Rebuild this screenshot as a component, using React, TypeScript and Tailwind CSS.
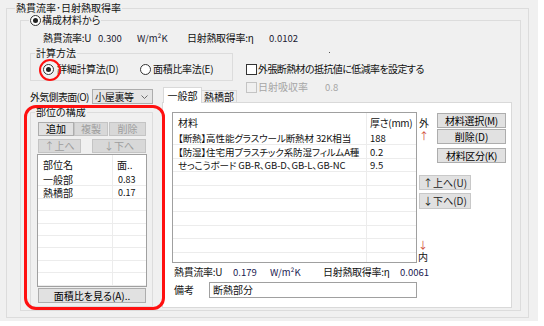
import React from "react";

function Radio({ checked }: { checked?: boolean }) {
  return (
    <span className="w-[11px] h-[11px] rounded-full border border-[#333333] bg-white flex items-center justify-center shrink-0">
      {checked && <span className="w-[5px] h-[5px] rounded-full bg-[#222222]" />}
    </span>
  );
}

function Checkbox({ disabled }: { disabled?: boolean }) {
  return (
    <span
      className={
        disabled
          ? "w-[11px] h-[11px] border border-[#c4c4c4] bg-[#f0f0f0] shrink-0"
          : "w-[11px] h-[11px] border border-[#333333] bg-white shrink-0"
      }
    />
  );
}

function Btn({
  children,
  className,
  disabled,
  light,
}: {
  children: React.ReactNode;
  className: string;
  disabled?: boolean;
  light?: boolean;
}) {
  const base = "flex items-center justify-center whitespace-nowrap border shrink-0 ";
  const look = disabled
    ? "bg-[#d8d8d8] border-[#c4c4c4] text-[#9d9d9d] "
    : light
    ? "bg-[#e1e1e1] border-[#c8c8c8] text-[#222222] "
    : "bg-[#e1e1e1] border-[#adadad] text-black ";
  return <div className={base + look + className}>{children}</div>;
}

const leftRows = [
  ["一般部", "0.83"],
  ["熱橋部", "0.17"],
  ["", ""],
  ["", ""],
  ["", ""],
  ["", ""],
  ["", ""],
  ["", ""],
  ["", ""],
];

const matRows = [
  ["【断熱】高性能グラスウール断熱材 32K相当", "188"],
  ["【防湿】住宅用プラスチック系防湿フィルムA種", "0.2"],
  ["せっこうボード GB-R、GB-D、GB-L、GB-NC", "9.5"],
  ["", ""],
  ["", ""],
  ["", ""],
  ["", ""],
  ["", ""],
  ["", ""],
  ["", ""],
];

export default function App() {
  return (
    <div className="w-[544px] h-[326px] bg-white overflow-hidden font-['Noto_Sans_CJK_JP','Noto_Sans',sans-serif] text-[10px] leading-[12px] text-[#111111] [font-feature-settings:'palt']">
      <div className="w-[538px] h-[321px] bg-[#f0f0f0] pt-[2px] pl-[6px]">
        <fieldset className="w-[523px] h-[316px] border border-[#dcdcdc]">
          <legend className="ml-[8px] px-[1px] leading-[12px]">熱貫流率･日射熱取得率</legend>

          <fieldset className="ml-[13px] w-[501px] h-[297px] border border-[#dcdcdc]">
            <legend className="ml-[8px] px-[1px] leading-[12px]">
              <span className="flex items-center h-[12px]">
                <Radio checked />
                <span className="ml-[1px]">構成材料から</span>
              </span>
            </legend>

            <div className="flex flex-col">
              {/* stats */}
              <div className="mt-[6px] ml-[22px] grid grid-cols-[55px_39px_50px_82px_auto] h-[12px] items-center whitespace-nowrap">
                <span className="tracking-[-0.3px]">熱貫流率:U</span>
                <span className="text-[#202030] text-[9.5px]">0.300</span>
                <span className="text-[#202030] text-[9.5px]">W/m²K</span>
                <span className="tracking-[-0.3px]">日射熱取得率:η</span>
                <span className="text-[#202030] text-[9.5px]">0.0102</span>
              </div>

              {/* calc method + checkboxes */}
              <div className="mt-[3px] flex items-start">
                <fieldset className="ml-[9px] w-[203px] h-[34px] border border-[#dcdcdc]">
                  <legend className="ml-[4px] px-[1px] leading-[12px]">計算方法</legend>
                  <div className="relative mt-[4px] pl-[12px] flex items-center h-[12px] whitespace-nowrap">
                    <span className="w-[97px] flex items-center">
                      <Radio checked />
                      <span className="ml-[3px] tracking-[-0.3px]">詳細計算法(D)</span>
                    </span>
                    <Radio />
                    <span className="ml-[2px] tracking-[-0.3px]">面積比率法(E)</span>
                    <span className="absolute left-[8px] top-[-4px] w-[22px] h-[22px] rounded-full border-[2.5px] border-[#ff1010]" />
                  </div>
                </fieldset>
                <div className="ml-[13px] flex flex-col -mb-[6px] whitespace-nowrap">
                  <span className="ml-[83px] mt-[5px] w-[1px] h-[1px] bg-[#555555]" />
                  <div className="mt-[10px] flex items-center h-[12px]">
                    <Checkbox />
                    <span className="ml-[1px] tracking-[-0.6px]">外張断熱材の抵抗値に低減率を設定する</span>
                  </div>
                  <div className="mt-[6px] flex items-center h-[12px] text-[#a6a6a6]">
                    <Checkbox disabled />
                    <span className="ml-[1px] w-[67px]">日射吸収率</span>
                    <span className="text-[9.5px]">0.8</span>
                  </div>
                </div>
              </div>

              {/* bottom area */}
              <div className="flex">
                {/* left column */}
                <div className="relative w-[141px] pl-[9px] flex flex-col shrink-0">
                  <div className="mt-[2px] flex items-center h-[15px] whitespace-nowrap">
                    <span className="w-[62px] tracking-[-0.7px]">外気側表面(O)</span>
                    <div className="w-[61px] h-[15px] border border-[#adadad] bg-[#e5e5e5] flex items-center justify-between pl-[2px] pr-[4px]">
                      <span className="tracking-[-0.3px]">小屋裏等</span>
                      <svg width="7" height="4" viewBox="0 0 7 4">
                        <polyline points="0.5,0.5 3.5,3.5 6.5,0.5" fill="none" stroke="#6a6a6a" strokeWidth="1" />
                      </svg>
                    </div>
                  </div>

                  <fieldset className="mt-[2px] w-[123px] h-[201px] border border-[#dcdcdc]">
                    <legend className="ml-[4px] px-[1px] leading-[12px]">部位の構成</legend>
                    <div className="flex flex-col">
                      <div className="mt-[4px] ml-[7px] flex h-[14px]">
                        <Btn className="w-[36px] h-[14px]">追加</Btn>
                        <Btn className="w-[34px] h-[14px]" disabled>複製</Btn>
                        <Btn className="ml-[1px] w-[37px] h-[14px]" disabled>削除</Btn>
                      </div>
                      <div className="mt-[3px] ml-[7px] flex h-[14px]">
                        <Btn className="w-[43px] h-[14px]" disabled>↑上へ</Btn>
                        <Btn className="ml-[11px] w-[54px] h-[14px]" disabled>↓下へ</Btn>
                      </div>
                      <div className="mt-[1px] ml-[6px] w-[110px] h-[133px] border border-[#a0a0a0] bg-white overflow-hidden flex flex-col">
                        <div className="flex h-[19px] shrink-0">
                          <div className="w-[75px] border-r border-[#ececec] pl-[5px] flex items-center">部位名</div>
                          <div className="pl-[4px] flex items-center">面..</div>
                        </div>
                        {leftRows.map((r, i) => (
                          <div key={i} className="flex h-[12.4px] shrink-0 border-b border-[#ececec] leading-[11px]">
                            <div className="w-[75px] border-r border-[#ececec] pl-[5px] flex items-center">{r[0]}</div>
                            <div className="pl-[5px] flex items-center text-[9px]">{r[1]}</div>
                          </div>
                        ))}
                      </div>
                      <Btn className="mt-[1px] ml-[7px] w-[108px] h-[15px]">面積比を見る(A)..</Btn>
                    </div>
                  </fieldset>

                  <span className="absolute left-[3px] top-[18px] w-[141px] h-[205px] rounded-[12px] border-[3px] border-[#ff1010] z-10" />
                </div>

                {/* right column: tabs */}
                <div className="flex flex-col w-[350px]">
                  <div className="flex items-end h-[15px] pl-[1px]">
                    <div className="relative z-10 -mb-[1px] w-[39px] h-[16px] bg-white border-l border-t border-r border-[#d9d9d9] flex items-center justify-center">
                      一般部
                    </div>
                    <div className="w-[35px] h-[12px] bg-[#f0f0f0] border-t border-r border-[#d9d9d9] flex items-center justify-center">
                      熱橋部
                    </div>
                  </div>
                  <div className="w-[350px] h-[206px] border border-[#d9d9d9] bg-white flex flex-col">
                    <div className="flex">
                      <div className="ml-[9px] mt-[9px] w-[245px] h-[151px] border border-[#a0a0a0] overflow-hidden flex flex-col whitespace-nowrap">
                        <div className="flex h-[19px] shrink-0">
                          <div className="w-[194px] border-r border-[#ececec] pl-[5px] flex items-center">材料</div>
                          <div className="pl-[3px] flex items-center tracking-[-0.3px]">厚さ(mm)</div>
                        </div>
                        {matRows.map((r, i) => (
                          <div key={i} className="flex h-[13.4px] shrink-0 border-b border-[#ececec]">
                            <div className="w-[194px] border-r border-[#ececec] pl-[5px] flex items-center overflow-hidden text-[9.5px] tracking-[-0.1px]">{r[0]}</div>
                            <div className="pl-[3px] flex items-center text-[9.5px]">{r[1]}</div>
                          </div>
                        ))}
                      </div>
                      <div className="w-[94px] flex flex-col">
                        <div className="mt-[10px] flex">
                          <div className="w-[20px] flex flex-col pl-[2px]">
                            <span className="mt-[4px]">外</span>
                            <span className="mt-[1px] text-[#d04a3a]">↑</span>
                          </div>
                          <div className="flex flex-col">
                            <Btn className="w-[69px] h-[15px] tracking-[-0.3px]">材料選択(M)</Btn>
                            <Btn className="mt-[1px] w-[69px] h-[15px]">削除(D)</Btn>
                            <Btn className="mt-[4px] w-[69px] h-[15px] tracking-[-0.3px]">材料区分(K)</Btn>
                          </div>
                        </div>
                        <Btn className="mt-[12px] ml-[2px] w-[52px] h-[15px]" light>↑上へ(U)</Btn>
                        <Btn className="mt-[3px] ml-[2px] w-[52px] h-[16px]" light>↓下へ(D)</Btn>
                        <div className="flex-1" />
                        <span className="ml-[1px] h-[12px] text-[#d04a3a]">↓</span>
                        <span className="ml-[1px] h-[12px]">内</span>
                      </div>
                    </div>

                    <div className="mt-[3px] ml-[11px] grid grid-cols-[59px_37px_53px_77px_auto] h-[12px] items-center whitespace-nowrap">
                      <span className="tracking-[-0.3px]">熱貫流率:U</span>
                      <span className="text-[#202050] text-[9.5px]">0.179</span>
                      <span className="text-[#202050] text-[9.5px]">W/m²K</span>
                      <span className="tracking-[-0.3px]">日射熱取得率:η</span>
                      <span className="text-[#202050] text-[9.5px]">0.0061</span>
                    </div>
                    <div className="mt-[4px] pl-[11px] flex h-[16px] items-center">
                      <span className="w-[35px]">備考</span>
                      <div className="w-[208px] h-[16px] border border-[#a0a0a0] bg-white pl-[3px] flex items-center">断熱部分</div>
                    </div>
                  </div>
                </div>
              </div>
            </div>
          </fieldset>
        </fieldset>
      </div>
    </div>
  );
}
